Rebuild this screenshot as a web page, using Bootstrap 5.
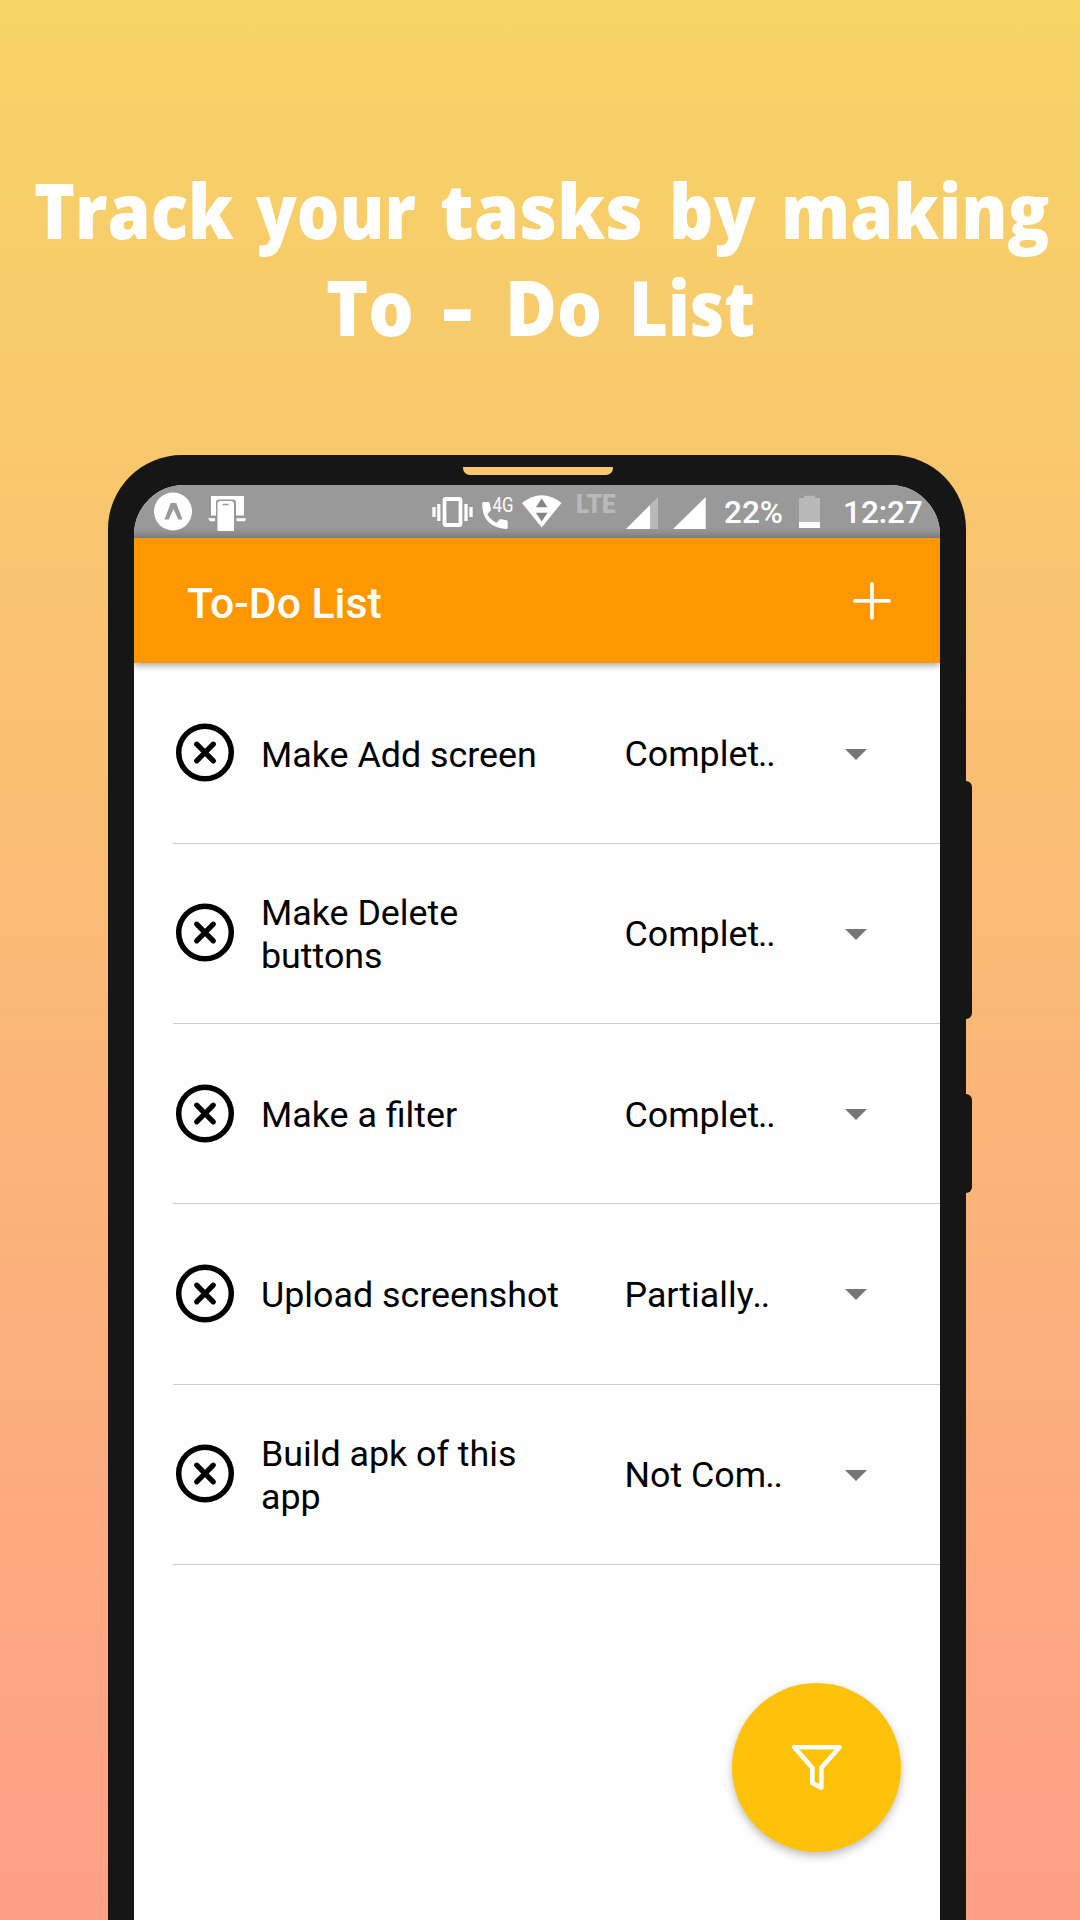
<!DOCTYPE html>
<html lang="en">
<head>
<meta charset="utf-8">
<meta name="viewport" content="width=device-width, initial-scale=1">
<title>To-Do List</title>
<link href="https://cdn.jsdelivr.net/npm/bootstrap@5.3.0/dist/css/bootstrap.min.css" rel="stylesheet">
<style>
  body { width: 1080px; height: 1920px; background: linear-gradient(#f6d465, #fe9f86); font-family: Roboto, sans-serif; color: #000; }
  .hero { height: 454.5px; padding-top: 161px; }
  .hero h1 { font: 800 77px/97px "Open Sans", sans-serif; color: #fff; }
  .hero .line { height: 97px; white-space: nowrap; }
  .line-1 { padding-left: 34px; }
  .line-2 { padding-left: 326px; }
  .line > span { flex: none; transform-origin: left; }
  .w1 { width: 222px; transform: scaleX(.9); } .w2 { width: 184px; transform: scaleX(.87); } .w3 { width: 229px; transform: scaleX(.95); }
  .w4 { width: 112px; transform: scaleX(.9); } .w5 { transform: scaleX(.898); }
  .v1 { width: 116px; transform: scaleX(.93); } .v2 { width: 63px; transform: scaleX(1.25); } .v3 { width: 124px; transform: scaleX(.92); } .v4 { transform: scaleX(.868); }
  .phone { width: 857.5px; height: 1465.5px; margin-left: 108px; padding: 30px 25.5px 0 26px; background: #161616; border-radius: 74px 74px 0 0; }
  .speaker { top: 12.500px; left: 355px; width: 150px; height: 7.500px; background: #f8c670; border-radius: 0 0 7px 7px; }
  .side-key { left: 857px; width: 7px; background: #161616; border-radius: 0 6px 6px 0; }
  .key-volume { top: 326.5px; height: 238px; }
  .key-power { top: 639.5px; height: 99px; }
  .screen { height: 1436px; background: #fefefe; border-radius: 50px 50px 0 0; overflow: hidden; }
  .status { height: 53.5px; background: linear-gradient(#999 80%, #858585); color: #fff; font-size: 31.5px; font-weight: 500; line-height: 56px; }
  .status svg { flex: none; height: 54px; overflow: visible; }
  .app-bar { height: 125px; background: #ff9800; color: #fff; padding: 0 47px 0 53px; box-shadow: 0 2px 7px rgba(0,0,0,.38); }
  .app-title { font-size: 42.7px; font-weight: 500; line-height: 50px; padding-top: 5px; }
  .tasks { margin-left: 39px; padding-top: .6px; }
  .task { height: 180.25px; border-bottom: 1px solid #ccc; padding-left: 2px; font-size: 35.8px; line-height: 43px; }
  .task > svg { flex: none; }
  .task-name { width: 310px; margin-left: 26px; padding-top: 4px; }
  .task-state { width: 220px; margin-left: 53.5px; padding-top: 3px; }
  .dots { letter-spacing: -1.2px; margin-left: -1px; }
  .caret { margin-top: 2px; }
  .fab { left: 598px; top: 1198px; width: 169px; height: 169px; background: #ffc20a; box-shadow: 0 4px 9px rgba(0,0,0,.25); }
</style>
</head>
<body class="overflow-hidden m-0">
<header class="hero">
  <h1 class="m-0">
    <span class="line line-1 d-flex"><span class="w1">Track</span><span class="w2">your</span><span class="w3">tasks</span><span class="w4">by</span><span class="w5">making</span></span>
    <span class="line line-2 d-flex"><span class="v1">To</span><span class="v2">-</span><span class="v3">Do</span><span class="v4">List</span></span>
  </h1>
</header>
<main class="phone position-relative">
  <div class="speaker position-absolute"></div>
  <div class="side-key key-volume position-absolute"></div>
  <div class="side-key key-power position-absolute"></div>
  <div class="screen position-relative">
    <div class="status d-flex">
      <svg width="38" viewBox="154 484 38 54" style="margin-left:20px"><circle cx="173" cy="510.5" r="19" fill="#fff"/><path d="M164.500 518.500h4.200L173.500 508l4.800 10.500h4.200L176.300 502h-5.600z" fill="#999"/></svg>
      <svg width="38" viewBox="208 484 38 54" style="margin-left:16px"><path fill="#fff" d="M211 495h33v19.500h-8v-13q0-3-3-3h-14q-3 0-3 3v13h-5zM208 517.200h7v3h-5zM236.500 517.200h9.500l-1 3h-8.500zM217.500 503q0-3 3-3h10q3.500 0 3.500 3v27h-16.500z"/><path d="M222.500 503.600h6" stroke="#999" stroke-width="1.500"/></svg>
      <svg width="41" viewBox="432 484 41 54" style="margin-left:186px"><rect x="444.500" y="498" width="16" height="26" rx="1.500" fill="none" stroke="#fff" stroke-width="3.800"/><path stroke="#fff" stroke-width="3.300" d="M434 506v10M438.800 503v17M466 503v17M471 506v10"/></svg>
      <svg width="33" viewBox="481 484 33 54" style="margin-left:8px"><path fill="#fff" d="M482.500 501h6q1.300 0 1.400 1.500.2 3 1 5.500.2 1-.5 1.700l-3 3.500q3.400 6 9 8.500l3-3q.8-.8 1.800-.500l5.500 1q1 .3 1 1.400v6q0 1.400-1.500 1.400-24-2-24-25.500 0-1.500 1.300-1.500z"/><text x="492.500" y="511" font-family="Roboto" font-weight="400" font-size="20" textLength="21" lengthAdjust="spacingAndGlyphs" fill="#fff">4G</text></svg>
      <svg width="40" viewBox="522 484 40 54" style="margin-left:8px"><path fill="#fff" d="M522 502q19.700-15.500 39.500 0L541.700 526.500z"/><path fill="#858585" d="M541.700 497.500l5.800 8.700h-11.600zM541.700 520.500l5.800-8.700h-11.600z"/></svg>
      <svg width="38" viewBox="577 484 38 54" style="margin-left:15px"><text x="576" y="512" font-family="Roboto" font-weight="900" font-size="25" textLength="39.500" lengthAdjust="spacingAndGlyphs" fill="#b9b9b9">LTE</text></svg>
      <svg width="32" viewBox="626 484 32 54" style="margin-left:11px"><path fill="#fff" d="M626 528h24v-24z"/><path fill="#b9b9b9" d="M650 528h8v-32l-8 8z"/></svg>
      <svg width="33" viewBox="673 484 33 54" style="margin-left:15px"><path fill="#fff" d="M673 528h32.700v-32z"/></svg>
      <span style="margin-left:18px;width:60px">22%</span>
      <svg width="21" viewBox="799 484 21 54" style="margin-left:15px"><path fill="#b9b9b9" d="M799 497h5v-2.300h11V497h5v24h-21z"/><path fill="#fff" d="M799 521h21v6h-21z"/></svg>
      <span style="margin-left:23px">12:27</span>
    </div>
    <div class="app-bar position-relative d-flex align-items-center justify-content-between">
      <div class="app-title">To-Do List</div>
      <svg width="42" height="42" viewBox="-21 -21 42 42"><path d="M-17-.2h34M0-17.200v34" stroke="#fff" stroke-width="3.700" stroke-linecap="round"/></svg>
    </div>
    <svg class="d-none"><defs>
      <g id="remove"><circle r="26.300" fill="none" stroke="#000" stroke-width="5.500"/><path d="M-8.300-8.300L8.300 8.300M8.300-8.300L-8.300 8.300" stroke="#000" stroke-width="5.200" stroke-linecap="round"/></g>
    </defs></svg>
    <div class="tasks">
      <div class="task d-flex align-items-center"><svg width="60" height="60" viewBox="-30 -29.500 60 60"><use href="#remove"/></svg><div class="task-name">Make Add screen</div><div class="task-state">Complet<span class="dots">..</span></div><svg class="caret" width="22" height="11"><path d="M0 0h22L11 11z" fill="#757575"/></svg></div>
      <div class="task d-flex align-items-center"><svg width="60" height="60" viewBox="-30 -29.500 60 60"><use href="#remove"/></svg><div class="task-name">Make Delete<br>buttons</div><div class="task-state">Complet<span class="dots">..</span></div><svg class="caret" width="22" height="11"><path d="M0 0h22L11 11z" fill="#757575"/></svg></div>
      <div class="task d-flex align-items-center"><svg width="60" height="60" viewBox="-30 -29.500 60 60"><use href="#remove"/></svg><div class="task-name">Make a filter</div><div class="task-state">Complet<span class="dots">..</span></div><svg class="caret" width="22" height="11"><path d="M0 0h22L11 11z" fill="#757575"/></svg></div>
      <div class="task d-flex align-items-center"><svg width="60" height="60" viewBox="-30 -29.500 60 60"><use href="#remove"/></svg><div class="task-name">Upload screenshot</div><div class="task-state">Partially<span class="dots">..</span></div><svg class="caret" width="22" height="11"><path d="M0 0h22L11 11z" fill="#757575"/></svg></div>
      <div class="task d-flex align-items-center"><svg width="60" height="60" viewBox="-30 -29.500 60 60"><use href="#remove"/></svg><div class="task-name">Build apk of this<br>app</div><div class="task-state">Not Com<span class="dots">..</span></div><svg class="caret" width="22" height="11"><path d="M0 0h22L11 11z" fill="#757575"/></svg></div>
    </div>
    <div class="fab rounded-circle position-absolute d-flex align-items-center justify-content-center"><svg width="54" height="54" viewBox="790 1740 54 54"><path d="M794.200 1747.200H839.600L821.300 1767.700V1787.700L812.300 1783V1767.700z" fill="none" stroke="#fff" stroke-width="4.600" stroke-linejoin="round"/></svg></div>
  </div>
</main>
<script src="https://cdn.jsdelivr.net/npm/bootstrap@5.3.0/dist/js/bootstrap.bundle.min.js"></script>
</body>
</html>
